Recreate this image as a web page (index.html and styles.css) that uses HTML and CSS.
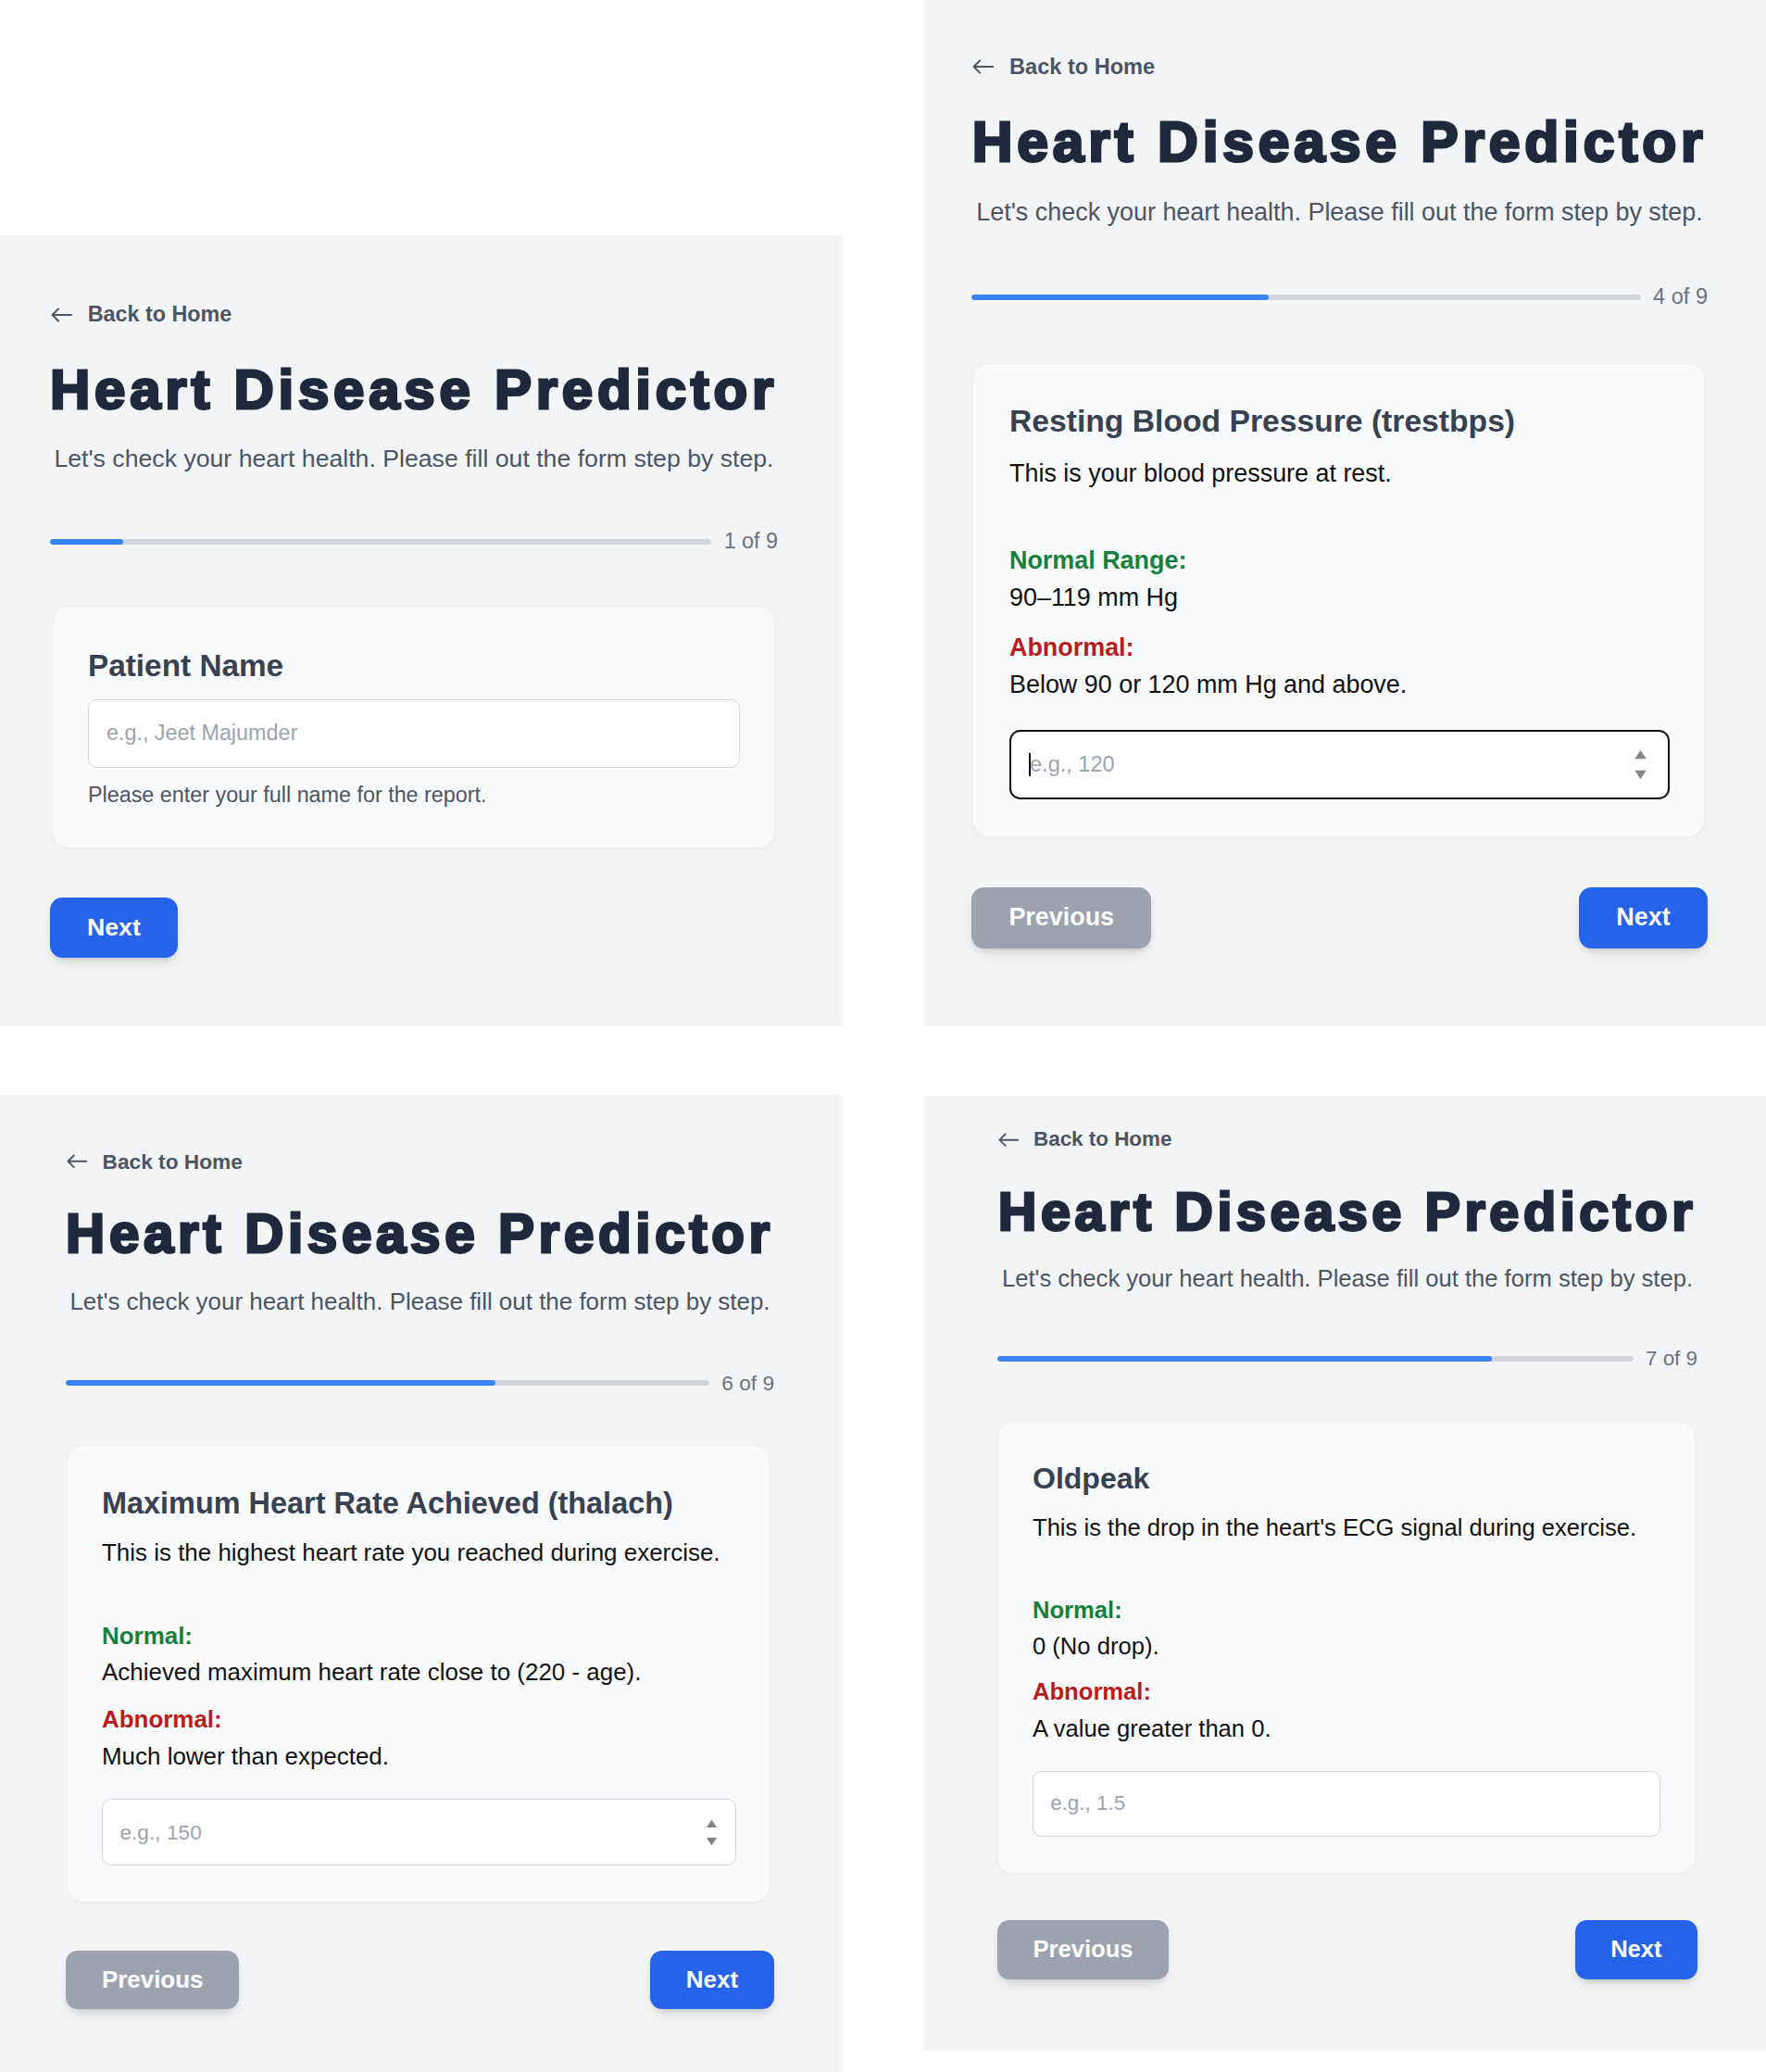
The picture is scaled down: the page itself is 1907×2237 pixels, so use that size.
FILE: index.html
```html
<!DOCTYPE html>
<html lang="en">
<head>
<meta charset="utf-8">
<title>Heart Disease Predictor</title>
<link rel="stylesheet" href="styles.css">
</head>
<body>
<main class="board">

  <section class="panel panel--1">
    <a class="back" href="#"><svg class="back__icon" viewBox="0 0 24 16"><path d="M23 8H2.5M9 1.5 2.5 8 9 14.5"/></svg><span>Back to Home</span></a>
    <h1 class="title">Heart Disease Predictor</h1>
    <p class="subtitle">Let's check your heart health. Please fill out the form step by step.</p>
    <div class="progress"><div class="track"><div class="fill" style="width:11.11%"></div></div><span class="count">1 of 9</span></div>
    <div class="card">
      <h2 class="card__title">Patient Name</h2>
      <div class="field-wrap field-wrap--gap"><input class="field" type="text" placeholder="e.g., Jeet Majumder"></div>
      <p class="help">Please enter your full name for the report.</p>
    </div>
    <div class="actions actions--single"><button class="btn btn--next">Next</button></div>
  </section>

  <section class="panel panel--2">
    <a class="back" href="#"><svg class="back__icon" viewBox="0 0 24 16"><path d="M23 8H2.5M9 1.5 2.5 8 9 14.5"/></svg><span>Back to Home</span></a>
    <h1 class="title">Heart Disease Predictor</h1>
    <p class="subtitle">Let's check your heart health. Please fill out the form step by step.</p>
    <div class="progress"><div class="track"><div class="fill" style="width:44.44%"></div></div><span class="count">4 of 9</span></div>
    <div class="card">
      <h2 class="card__title">Resting Blood Pressure (trestbps)</h2>
      <p class="desc">This is your blood pressure at rest.</p>
      <p class="range range--ok">Normal Range:</p>
      <p class="value">90–119 mm Hg</p>
      <p class="range range--bad">Abnormal:</p>
      <p class="value">Below 90 or 120 mm Hg and above.</p>
      <div class="field-wrap field-wrap--input"><input class="field field--focus" type="text" placeholder="e.g., 120"><span class="caret"></span><svg class="spin" viewBox="0 0 14 30"><path d="M7 0 13 9H1ZM1 21H13L7 30Z"/></svg></div>
    </div>
    <div class="actions"><button class="btn btn--prev">Previous</button><button class="btn btn--next">Next</button></div>
  </section>

  <section class="panel panel--3">
    <a class="back" href="#"><svg class="back__icon" viewBox="0 0 24 16"><path d="M23 8H2.5M9 1.5 2.5 8 9 14.5"/></svg><span>Back to Home</span></a>
    <h1 class="title">Heart Disease Predictor</h1>
    <p class="subtitle">Let's check your heart health. Please fill out the form step by step.</p>
    <div class="progress"><div class="track"><div class="fill" style="width:66.67%"></div></div><span class="count">6 of 9</span></div>
    <div class="card">
      <h2 class="card__title">Maximum Heart Rate Achieved (thalach)</h2>
      <p class="desc">This is the highest heart rate you reached during exercise.</p>
      <p class="range range--ok">Normal:</p>
      <p class="value">Achieved maximum heart rate close to (220 - age).</p>
      <p class="range range--bad">Abnormal:</p>
      <p class="value">Much lower than expected.</p>
      <div class="field-wrap field-wrap--input"><input class="field" type="text" placeholder="e.g., 150"><svg class="spin" viewBox="0 0 14 30"><path d="M7 0 13 9H1ZM1 21H13L7 30Z"/></svg></div>
    </div>
    <div class="actions"><button class="btn btn--prev">Previous</button><button class="btn btn--next">Next</button></div>
  </section>

  <section class="panel panel--4">
    <a class="back" href="#"><svg class="back__icon" viewBox="0 0 24 16"><path d="M23 8H2.5M9 1.5 2.5 8 9 14.5"/></svg><span>Back to Home</span></a>
    <h1 class="title">Heart Disease Predictor</h1>
    <p class="subtitle">Let's check your heart health. Please fill out the form step by step.</p>
    <div class="progress"><div class="track"><div class="fill" style="width:77.78%"></div></div><span class="count">7 of 9</span></div>
    <div class="card">
      <h2 class="card__title">Oldpeak</h2>
      <p class="desc">This is the drop in the heart's ECG signal during exercise.</p>
      <p class="range range--ok">Normal:</p>
      <p class="value">0 (No drop).</p>
      <p class="range range--bad">Abnormal:</p>
      <p class="value">A value greater than 0.</p>
      <div class="field-wrap field-wrap--input"><input class="field" type="text" placeholder="e.g., 1.5"></div>
    </div>
    <div class="actions"><button class="btn btn--prev">Previous</button><button class="btn btn--next">Next</button></div>
  </section>

</main>
</body>
</html>
```

FILE: styles.css
```css
* { box-sizing: border-box; }
html, body { margin: 0; padding: 0; }
body {
  width: 1907px;
  height: 2237px;
  overflow: hidden;
  background: #ffffff;
  font-family: "Liberation Sans", Arial, sans-serif;
}

.board {
  display: grid;
  grid-template-columns: 910px 910px;
  grid-template-rows: 1108px 1055px;
  column-gap: 87px;
  row-gap: 74px;
}

.panel {
  background: #f3f4f6;
  display: flex;
  flex-direction: column;
  padding: var(--pt) var(--pr) 0 var(--pl);
}

.panel--1 {
  align-self: end; height: 854px;
  --z: 1.667; --pt: 74px; --pl: 54px; --pr: 70px;
  --g-head: 39.8px; --g-sub: 31.3px; --g-bar: 64.2px; --g-card: 58.3px;
  --card-ml: 3px; --card-mr: 4px; --card-pt: 46.7px; --card-pl: 38px; --card-pr: 37px; --card-pb: 44.7px;
  --input-h: 74px; --g-btn: 54px; --btn-h: 65px;
}
.panel--2 {
  height: 1108px;
  --z: 1.683; --pt: 60.5px; --pl: 52px; --pr: 63px;
  --g-head: 39.4px; --g-sub: 32px; --g-bar: 66.2px; --g-card: 60.7px;
  --card-ml: 2px; --card-mr: 4px; --card-pt: 45px; --card-pl: 39px; --card-pr: 37px; --card-pb: 40px;
  --g-desc: 26.1px; --g-normal: 67.3px; --g-val: 13.1px; --g-abn: 27.1px; --g-input: 34.6px;
  --input-h: 75px; --g-btn: 55px; --btn-h: 66px;
}
.panel--3 {
  height: 1055px;
  --z: 1.622; --pt: 60.9px; --pl: 71px; --pr: 74px;
  --g-head: 37.2px; --g-sub: 32.2px; --g-bar: 62.3px; --g-card: 56.7px;
  --card-ml: 2px; --card-mr: 5px; --card-pt: 45.8px; --card-pl: 37px; --card-pr: 36px; --card-pb: 39px;
  --g-desc: 24.4px; --g-normal: 64.5px; --g-val: 13.4px; --g-abn: 25px; --g-input: 32.5px;
  --input-h: 72px; --g-btn: 53px; --btn-h: 63px;
}
.panel--4 {
  height: 1031px; margin-top: 1px;
  --z: 1.6; --pt: 36.1px; --pl: 80px; --pr: 74px;
  --g-head: 38px; --g-sub: 30.6px; --g-bar: 62.5px; --g-card: 57.8px;
  --card-ml: 1px; --card-mr: 3px; --card-pt: 43.8px; --card-pl: 37px; --card-pr: 37px; --card-pb: 39px;
  --g-desc: 24.9px; --g-normal: 63.4px; --g-val: 13.6px; --g-abn: 23.9px; --g-input: 32.7px;
  --input-h: 71px; --g-btn: 51px; --btn-h: 64px;
}

/* back link */
.back {
  display: flex;
  align-items: center;
  align-self: flex-start;
  color: #4b5563;
  text-decoration: none;
  font-weight: 700;
  font-size: calc(14px * var(--z));
  line-height: 1;
}
.back__icon {
  width: calc(14.4px * var(--z));
  height: calc(9.6px * var(--z));
  margin-right: calc(10px * var(--z));
  fill: none;
  stroke: #4b5563;
  stroke-width: 2;
  stroke-linecap: round;
  stroke-linejoin: round;
}

/* heading */
.title {
  margin: var(--g-head) 0 0;
  font-size: calc(36px * var(--z));
  line-height: 1;
  font-weight: 700;
  color: #1e293b;
  text-align: center;
  white-space: nowrap;
  letter-spacing: 0.079em;
  -webkit-text-stroke: calc(1.75px * var(--z)) #1e293b;
}

.subtitle {
  margin: var(--g-sub) 0 0;
  font-size: calc(16px * var(--z));
  line-height: 1;
  color: #4b5563;
  text-align: center;
  white-space: nowrap;
}

/* progress */
.progress {
  margin-top: var(--g-bar);
  display: flex;
  align-items: center;
  height: calc(14px * var(--z));
}
.track {
  flex: 1;
  height: calc(4px * var(--z));
  background: #d1d5db;
  border-radius: 999px;
  overflow: hidden;
}
.fill {
  height: 100%;
  background: #3b82f6;
  border-radius: 999px;
}
.count {
  margin-left: calc(8px * var(--z));
  font-size: calc(14px * var(--z));
  line-height: 1;
  color: #6b7280;
  white-space: nowrap;
}

/* card */
.card {
  margin: var(--g-card) var(--card-mr) 0 var(--card-ml);
  padding: var(--card-pt) var(--card-pr) var(--card-pb) var(--card-pl);
  background: #f9fafb;
  border-radius: calc(10px * var(--z));
  box-shadow: 0 1px 4px rgba(0, 0, 0, 0.05), 0 0 1px rgba(0, 0, 0, 0.04);
}
.card__title {
  margin: 0;
  font-size: calc(20px * var(--z));
  line-height: 1;
  font-weight: 700;
  color: #374151;
  white-space: nowrap;
}
.desc {
  margin: var(--g-desc) 0 0;
  font-size: calc(16px * var(--z));
  line-height: 1;
  color: #111111;
  white-space: nowrap;
}
.range {
  margin: var(--g-abn) 0 0;
  font-size: calc(16px * var(--z));
  line-height: 1;
  font-weight: 700;
}
.desc + .range { margin-top: var(--g-normal); }
.range--ok { color: #15803d; }
.range--bad { color: #b91c1c; }
.value {
  margin: var(--g-val) 0 0;
  font-size: calc(16px * var(--z));
  line-height: 1;
  color: #111111;
  white-space: nowrap;
}

.field-wrap { position: relative; }
.field-wrap--gap { margin-top: 20px; }
.field-wrap--input { margin-top: var(--g-input); }
.field {
  display: block;
  width: 100%;
  height: var(--input-h);
  margin: 0;
  padding: 0 0 0 calc(12px * var(--z) - 1px);
  border: 1px solid #d1d5db;
  border-radius: calc(6px * var(--z));
  background: #ffffff;
  font-family: "Liberation Sans", Arial, sans-serif;
  font-size: calc(14px * var(--z));
  color: #111827;
  outline: none;
}
.field::placeholder { color: #9ca3af; opacity: 1; }
.field--focus {
  border: 2px solid #111111;
  border-radius: calc(7px * var(--z));
  padding-left: 20px;
}
.caret {
  position: absolute;
  left: 21px;
  top: 25px;
  width: 1.5px;
  height: 25px;
  background: #111111;
}
.spin {
  position: absolute;
  right: 24px;
  top: 50%;
  width: 15px;
  height: 31px;
  margin-top: -15.5px;
  fill: #858585;
}
.panel--3 .spin { right: 20px; width: 13px; }

.help {
  margin: 18px 0 0;
  font-size: calc(14px * var(--z));
  line-height: 1;
  color: #4b5563;
}

/* buttons */
.actions {
  margin-top: var(--g-btn);
  display: flex;
  justify-content: space-between;
  align-items: center;
}
.actions--single { justify-content: flex-start; }
.btn {
  height: var(--btn-h);
  padding: 0 calc(24px * var(--z));
  border: 0;
  border-radius: calc(8px * var(--z));
  font-family: "Liberation Sans", Arial, sans-serif;
  font-weight: 700;
  font-size: calc(16px * var(--z));
  line-height: 1;
  color: #ffffff;
  box-shadow: 0 7px 12px -3px rgba(0, 0, 0, 0.14), 0 3px 6px -3px rgba(0, 0, 0, 0.1);
}
.btn--next { background: #2563eb; }
.btn--prev { background: #9ca3af; }
```
